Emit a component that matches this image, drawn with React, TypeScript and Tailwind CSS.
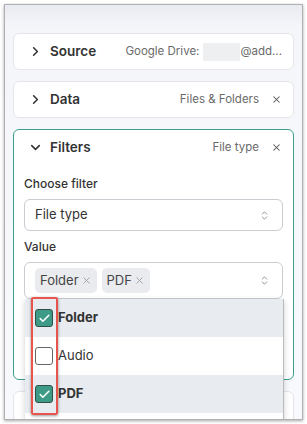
import React from "react";
import { ChevronRight, ChevronDown, X, ChevronsUpDown, Check } from "lucide-react";

const font = { fontFamily: "Inter, 'Noto Sans', sans-serif" };

function HeaderRow({
  open,
  title,
  right,
  closable,
}: {
  open?: boolean;
  title: string;
  right: React.ReactNode;
  closable?: boolean;
}) {
  return (
    <div className="h-[35px] flex items-center pl-[14px] pr-[11px]">
      {open ? (
        <ChevronDown className="w-[15px] h-[15px] text-[#333]" strokeWidth={2.5} />
      ) : (
        <ChevronRight className="w-[15px] h-[15px] text-[#333]" strokeWidth={2.5} />
      )}
      <span className="ml-[7px] text-[13.5px] font-semibold text-[#333]">{title}</span>
      <div className="ml-auto flex items-center text-[11.5px] text-[#6a6a6a]">
        {right}
        {closable && <X className="ml-[12px] w-[11px] h-[11px] text-[#555]" strokeWidth={2.2} />}
      </div>
    </div>
  );
}

function Box({ checked }: { checked: boolean }) {
  return checked ? (
    <div className="w-[18px] h-[18px] rounded-[3px] bg-[#3c9a86] border border-[#2f4f47] flex items-center justify-center">
      <Check className="w-[13px] h-[13px] text-white" strokeWidth={3} />
    </div>
  ) : (
    <div className="w-[18px] h-[18px] rounded-[3px] bg-white border border-[#666]" />
  );
}

export default function App() {
  const options = [
    { label: "Folder", checked: true },
    { label: "Audio", checked: false },
    { label: "PDF", checked: true },
    { label: "", checked: false },
  ];

  return (
    <div className="w-[307px] h-[424px] bg-white pt-[4px] px-[4px]" style={font}>
      <div className="relative h-[416px] border border-[#b0b0b0] shadow-[0_1px_3px_rgba(0,0,0,0.35)] overflow-hidden bg-[linear-gradient(to_bottom,#e8ebf1,#f5f6fa_22px,#f8f9fc)] px-[8px] pt-[28px] flex flex-col gap-[11px]">
        {/* Source */}
        <div className="bg-white border border-[#e4e6ea] rounded-[6px]">
          <HeaderRow
            title="Source"
            right={
              <span className="flex items-center">
                Google Drive:
                <span className="ml-[4px] w-[37px] h-[18px] bg-[#eeeff1]" />
                <span>@add...</span>
              </span>
            }
          />
        </div>

        {/* Data */}
        <div className="bg-white border border-[#e4e6ea] rounded-[6px]">
          <HeaderRow title="Data" right="Files & Folders" closable />
        </div>

        {/* Filters */}
        <div className="bg-white border border-[#3aa08d] rounded-[6px] h-[251px] shrink-0">
          <HeaderRow open title="Filters" right="File type" closable />
          <div className="px-[10px]">
            <div className="mt-[10px] text-[12px] font-medium text-[#333]">Choose filter</div>
            <div className="mt-[6px] h-[32px] border border-[#c9ccd1] rounded-[6px] flex items-center pl-[10px] pr-[12px] text-[13px] text-[#333]">
              File type
              <ChevronsUpDown className="ml-auto w-[11px] h-[11px] text-[#888]" />
            </div>
            <div className="mt-[7px] text-[12px] font-medium text-[#333]">Value</div>
            <div className="mt-[6px] h-[37px] border border-[#c9ccd1] rounded-[6px] flex items-center pl-[10px] pr-[12px] gap-[5px]">
              <span className="h-[25px] px-[5px] rounded-[5px] bg-[#e9ebef] flex items-center text-[13px] text-[#444]">
                Folder
                <X className="ml-[2px] w-[11px] h-[11px] text-[#999]" strokeWidth={1.8} />
              </span>
              <span className="h-[25px] px-[5px] rounded-[5px] bg-[#e9ebef] flex items-center text-[13px] text-[#444]">
                PDF
                <X className="ml-[2px] w-[11px] h-[11px] text-[#999]" strokeWidth={1.8} />
              </span>
              <ChevronsUpDown className="ml-auto w-[11px] h-[11px] text-[#888]" />
            </div>
          </div>
        </div>

        {/* Next card, mostly hidden */}
        <div className="bg-white border border-[#e4e6ea] rounded-[6px] h-[60px] shrink-0" />

        {/* Dropdown overlay */}
        <div className="absolute left-[20px] top-[294px] w-[259px] bg-white border-r border-[#bbb] shadow-[0_2px_6px_rgba(0,0,0,0.18)]">
          {options.map((o, i) => (
            <div
              key={i}
              className={`h-[38px] flex items-center pl-[10px] text-[13px] text-[#333] ${
                o.checked ? "bg-[#e8ebef] font-bold" : "bg-white"
              }`}
            >
              {o.label && <Box checked={o.checked} />}
              <span className="ml-[5px]">{o.label}</span>
            </div>
          ))}
        </div>

        {/* Highlight */}
        <div className="absolute left-[26px] top-[292px] w-[27px] h-[118px] border-[2.5px] border-[#e8554d] rounded-[2px] shadow-[0_1px_3px_rgba(0,0,0,0.4)]" />
      </div>
    </div>
  );
}
